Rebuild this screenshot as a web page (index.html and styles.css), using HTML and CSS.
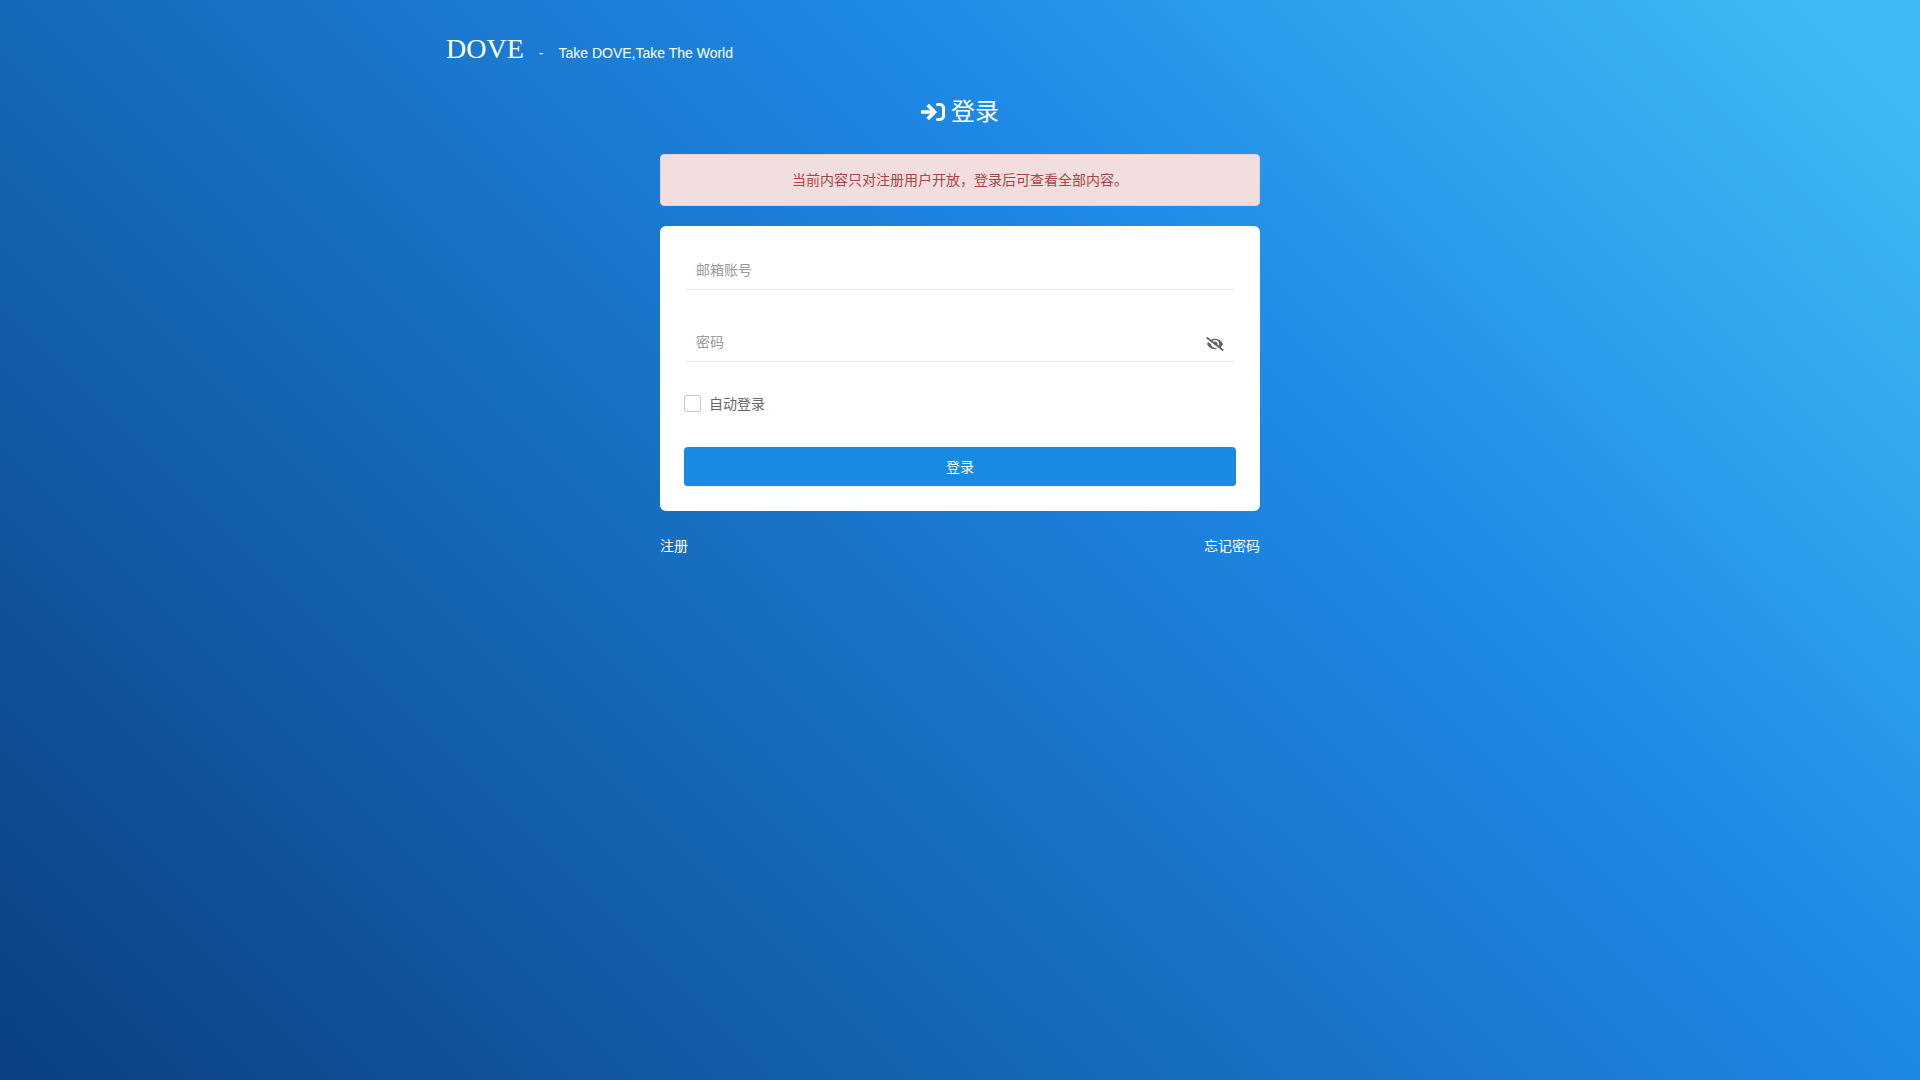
FILE: index.html
```html
<!DOCTYPE html>
<html lang="zh-CN">
<head>
    <meta charset="UTF-8">
    <meta name="viewport" content="width=device-width, initial-scale=1.0">
    <title>登录 - DOVE</title>
    <link rel="stylesheet" href="styles.css">
</head>
<body>
    <header class="header">
        <a class="logo" href="#">DOVE</a>
        <span>-</span>
        <span>Take DOVE,Take The World</span>
    </header>

    <main class="login">
        <h1 class="title">
            <svg class="title-icon" viewBox="0 0 24 24" fill="none" stroke="currentColor" aria-hidden="true">
                <path stroke-width="3.600" d="M0 12h13"/>
                <path stroke-width="3.600" d="M6.600 4.900L13.600 12l-7 7.100"/>
                <path stroke-width="3" stroke-linecap="round" d="M16.500 4.500H19a3.500 3.500 0 0 1 3.500 3.500v8a3.500 3.500 0 0 1-3.500 3.500h-2.500"/>
            </svg>
            登录
        </h1>

        <div class="alert" role="alert">当前内容只对注册用户开放，登录后可查看全部内容。</div>

        <form class="card" action="#" method="post">
            <input class="field" type="email" name="email" placeholder="邮箱账号" aria-label="邮箱账号">
            <div class="password">
                <input class="field" type="password" name="password" id="password" placeholder="密码" aria-label="密码">
                <button class="eye" id="eye" type="button" aria-label="显示密码">
                    <svg viewBox="0 0 640 512" fill="currentColor" aria-hidden="true">
                        <path d="M320 400c-75.900 0-137.300-58.700-142.900-133.100L72.200 185.800c-13.800 17.300-26.500 35.600-36.700 55.600a32.400 32.400 0 0 0 0 29.200C89.700 376.400 197.100 448 320 448c26.900 0 52.900-4 77.900-10.500L346 397.400a144.100 144.100 0 0 1-26 2.600zm313.800 58.100-110.500-85.400a331.300 331.300 0 0 0 81.200-102.100 32.400 32.400 0 0 0 0-29.200C550.300 135.600 442.900 64 320 64a308.200 308.200 0 0 0-147.300 37.700L45.500 3.400A16 16 0 0 0 23 6.200L3.400 31.500A16 16 0 0 0 6.200 53.900l588.400 454.700a16 16 0 0 0 22.400-2.800l19.600-25.300a16 16 0 0 0-2.800-22.400zM450.200 316.300l-39.300-30.400A94.800 94.800 0 0 0 416 256a94.800 94.800 0 0 0-121.300-92.200A47.700 47.700 0 0 1 304 192a46.600 46.600 0 0 1-1.500 10l-73.600-56.900A142.300 142.300 0 0 1 320 112a143.900 143.900 0 0 1 144 144c0 21.600-5.300 41.800-13.800 60.300z"/>
                    </svg>
                </button>
            </div>
            <label class="remember">
                <input type="checkbox" name="remember">
                自动登录
            </label>
            <button class="submit" type="submit">登录</button>
        </form>

        <nav class="links">
            <a href="#">注册</a>
            <a href="#">忘记密码</a>
        </nav>
    </main>

    <script>
        const password = document.getElementById("password");

        document.getElementById("eye").addEventListener("click", () => {
            password.type = password.type === "password" ? "text" : "password";
        });
    </script>
</body>
</html>
```
FILE: styles.css
```css
* {
    box-sizing: border-box;
}

body {
    margin: 0;
    min-height: 100vh;
    padding: 0 16px;
    font-family: "Liberation Sans", "Noto Sans CJK SC", sans-serif;
    font-size: 14px;
    line-height: 20px;
    color: #fff;
    background: linear-gradient(45deg, #0b4182 1%, #1e88e5 64%, #40baf5 97%);
}

a {
    color: inherit;
    text-decoration: none;
}

input,
button {
    font: inherit;
}

.header {
    display: flex;
    align-items: baseline;
    gap: 15px;
    max-width: 1028px;
    margin: 0 auto;
    padding-top: 32px;
}

.logo {
    font-family: "Liberation Serif", serif;
    font-size: 28px;
    line-height: 34px;
}

.login {
    max-width: 600px;
    margin: 0 auto;
}

.title {
    display: flex;
    align-items: center;
    justify-content: center;
    gap: 6px;
    margin: 30px 0 26px;
    font-size: 24px;
    font-weight: 400;
    line-height: 32px;
}

.title-icon {
    width: 24px;
    height: 24px;
}

.alert {
    padding: 15px;
    margin-bottom: 20px;
    text-align: center;
    color: #a94442;
    background-color: #f2dede;
    border: 1px solid #ebccd1;
    border-radius: 4px;
}

.card {
    padding: 24px;
    color: #666;
    background-color: #fff;
    border-radius: 6px;
}

.field {
    display: block;
    width: 100%;
    height: 40px;
    padding: 0 12px;
    margin-bottom: 32px;
    color: #666;
    background-color: #fff;
    border: none;
    border-bottom: 1px solid #e8e8e8;
    border-radius: 4px;
    outline: none;
}

.field::placeholder {
    color: #999;
}

.password {
    position: relative;
}

.password .field {
    padding-right: 48px;
}

.eye {
    position: absolute;
    top: 7px;
    right: 12px;
    display: flex;
    padding: 8px 0;
    color: #666;
    background: none;
    border: none;
    cursor: pointer;
}

.eye svg {
    width: 18px;
    height: 14px;
}

.remember {
    display: flex;
    align-items: flex-start;
    gap: 8px;
    margin-bottom: 32px;
    line-height: 21px;
}

.remember input {
    appearance: none;
    width: 17px;
    height: 17px;
    margin: 1px 0 0;
    background-color: #fff;
    border: 1px solid #c4c4c4;
    border-radius: 3px;
}

.remember input:checked {
    background-color: #188ae2;
    border-color: #188ae2;
}

.submit {
    display: block;
    width: 100%;
    height: 40px;
    color: #fff;
    background-color: #188ae2;
    border: none;
    border-bottom: 1px solid #e8edf2;
    border-radius: 4px;
    cursor: pointer;
}

.links {
    display: flex;
    justify-content: space-between;
    margin-top: 25px;
}
```
